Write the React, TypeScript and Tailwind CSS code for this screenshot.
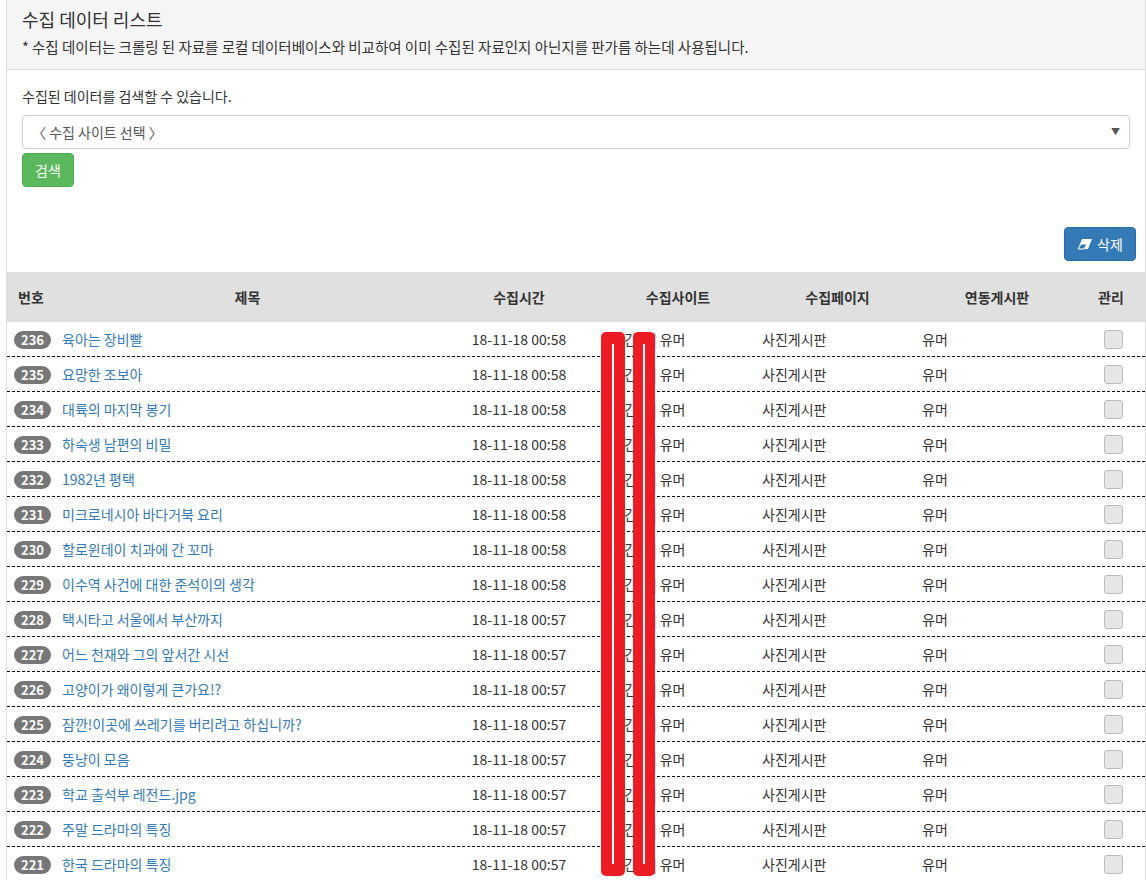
import React from "react";

const titles: [number, string][] = [
  [236, "육아는 장비빨"],
  [235, "요망한 조보아"],
  [234, "대륙의 마지막 봉기"],
  [233, "하숙생 남편의 비밀"],
  [232, "1982년 평택"],
  [231, "미크로네시아 바다거북 요리"],
  [230, "할로윈데이 치과에 간 꼬마"],
  [229, "이수역 사건에 대한 준석이의 생각"],
  [228, "택시타고 서울에서 부산까지"],
  [227, "어느 천재와 그의 앞서간 시선"],
  [226, "고양이가 왜이렇게 큰가요!?"],
  [225, "잠깐!이곳에 쓰레기를 버리려고 하십니까?"],
  [224, "뚱냥이 모음"],
  [223, "학교 출석부 레전드.jpg"],
  [222, "주말 드라마의 특징"],
  [221, "한국 드라마의 특징"],
];

const cols = "grid grid-cols-[48px_385px_158px_160px_159px_160px_68px]";

export default function App() {
  return (
    <div className="relative w-[1146px] h-[880px] overflow-hidden bg-white text-[#333] text-[14px]" style={{ fontFamily: '"Noto Sans CJK KR", "Noto Sans", sans-serif' }}>
      <div className="ml-[6px] w-[1140px] border-l border-r border-[#ddd] min-h-[880px]">
        <div className="h-[70px] bg-[#f5f5f5] border-b border-[#ddd] px-[15px] pt-[6px]">
          <div className="text-[18px] leading-[26px]">수집 데이터 리스트</div>
          <div className="text-[14.5px] mt-[5px] leading-[19px]">* 수집 데이터는 크롤링 된 자료를 로컬 데이터베이스와 비교하여 이미 수집된 자료인지 아닌지를 판가름 하는데 사용됩니다.</div>
        </div>
        <div className="px-[15px] pt-[16px]">
          <div className="text-[14px] leading-[20px]">수집된 데이터를 검색할 수 있습니다.</div>
          <div className="mt-[9px] h-[34px] w-[1108px] border border-[#ccc] rounded-[4px] flex items-center justify-between px-[9px]">
            <span className="text-[#555]">〈 수집 사이트 선택 〉</span>
            <span className="text-[9px] text-[#555]">▼</span>
          </div>
          <button className="mt-[4px] h-[34px] px-[12px] bg-[#5cb85c] border border-[#4cae4c] rounded-[4px] text-white">검색</button>
          <div className="flex justify-end mt-[40px]">
            <button className="h-[34px] w-[72px] -mr-[6px] bg-[#337ab7] border border-[#2e6da4] rounded-[4px] text-white flex items-center justify-center gap-[4px]">
              <svg width="16" height="12" viewBox="0 0 16 12"><path d="M5 1h10L11 11H1z" fill="white" /><path d="M1 11l3-5h6l-3 5z" fill="#337ab7" stroke="white" strokeWidth="1" /></svg>
              삭제
            </button>
          </div>
        </div>
        <div className="mt-[11px]">
          <div className={`${cols} h-[50px] bg-[#e0e0e0] items-center font-semibold text-[14px]`}>
            <div className="pl-[11px]">번호</div>
            <div className="text-center">제목</div>
            <div className="text-center">수집시간</div>
            <div className="text-center">수집사이트</div>
            <div className="text-center">수집페이지</div>
            <div className="text-center">연동게시판</div>
            <div className="text-center">관리</div>
          </div>
          {titles.map(([n, t]) => (
            <div key={n} className={`${cols} h-[35px] items-center border-b border-dashed border-black`}>
              <div className="pl-[7px]">
                <span className="inline-block bg-[#777] text-white text-[13px] font-bold rounded-[10px] px-[7px] leading-[18px]">{n}</span>
              </div>
              <div className="pl-[7px] text-[#337ab7]">{t}</div>
              <div className="text-center">18-11-18 {n >= 229 ? "00:58" : "00:57"}</div>
              <div className="pl-[13px]">웃긴대 | 유머</div>
              <div className="pl-[4px]">사진게시판</div>
              <div className="pl-[5px]">유머</div>
              <div className="flex justify-center pl-[4px]">
                <span className="w-[19px] h-[19px] rounded-[3px] border border-[#bbb] bg-[#e6e6e6]" />
              </div>
            </div>
          ))}
        </div>
      </div>
      <div className="absolute left-[601px] top-[332px] w-[24px] h-[544px] bg-[#ed1c24] rounded-[5px] flex justify-center pt-[12px]">
        <div className="w-[2px] h-[520px] bg-white" />
      </div>
      <div className="absolute left-[633px] top-[332px] w-[22px] h-[544px] bg-[#ed1c24] rounded-[5px] flex justify-center pt-[12px]">
        <div className="w-[2px] h-[520px] bg-white" />
      </div>
    </div>
  );
}
